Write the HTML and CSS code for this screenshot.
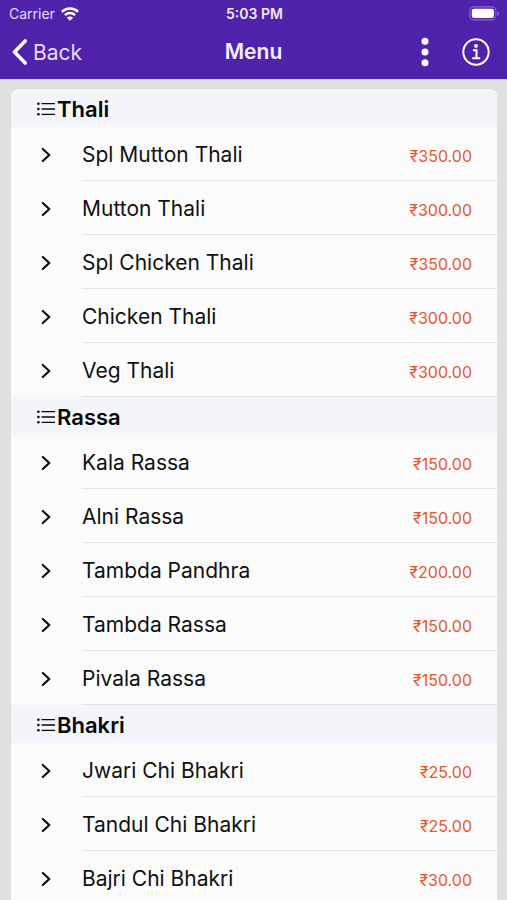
FILE: index.html
```html
<!DOCTYPE html>
<html lang="en">
<head>
<meta charset="utf-8">
<meta name="viewport" content="width=device-width, initial-scale=1">
<title>Menu</title>
<link rel="stylesheet" href="styles.css">
</head>
<body>
<svg class="sprite" aria-hidden="true">
  <symbol id="list" viewBox="0 0 18 14"><g fill="currentColor"><circle cx="1.4" cy="1.7" r="1.3"/><circle cx="1.4" cy="7" r="1.3"/><circle cx="1.4" cy="12.3" r="1.3"/></g><path d="M5 1.7h12.5M5 7h12.5M5 12.3h12.5" stroke="currentColor" stroke-width="1.3" stroke-linecap="round"/></symbol>
  <symbol id="chevron" viewBox="0 0 10 16"><path d="M1.8 2 8.300 8l-6.500 6" fill="none" stroke="currentColor" stroke-width="2.200" stroke-linecap="round" stroke-linejoin="round"/></symbol>
</svg>
<header class="top">
  <div class="status">
    <div class="carrier">Carrier
      <svg width="18" height="14" viewBox="0 0 18 14" fill="none" stroke="currentColor" stroke-width="2.500"><path d="M.9 4.900a11.500 11.500 0 0 1 16.200 0M3.900 8.200a7.300 7.300 0 0 1 10.200 0"/><path d="M9 13.800 5.900 10.700a4.400 4.400 0 0 1 6.200 0Z" fill="currentColor" stroke="none"/></svg>
    </div>
    <div class="time">5:03 PM</div>
    <svg class="battery" width="31" height="15" viewBox="0 0 31 15"><rect x=".9" y=".9" width="26" height="13" rx="4" fill="none" stroke="#8a6dcb" stroke-width="1.100"/><rect x="2.800" y="2.800" width="22.200" height="9.200" rx="2.200" fill="#fff"/><path d="M28.600 5.200c2 .8 2 3.700 0 4.500Z" fill="#8a6dcb"/></svg>
  </div>
  <nav class="bar">
    <button class="back" type="button"><svg width="16" height="26" viewBox="0 0 16 26"><path d="M13.200 2 2.500 13l10.700 11" fill="none" stroke="currentColor" stroke-width="3.600" stroke-linecap="round" stroke-linejoin="round"/></svg>Back</button>
    <h1>Menu</h1>
    <div class="actions">
      <button type="button" aria-label="More"><svg width="8" height="30" viewBox="0 0 8 30" fill="currentColor"><circle cx="4" cy="4.300" r="3.500"/><circle cx="4" cy="15" r="3.500"/><circle cx="4" cy="25.700" r="3.500"/></svg></button>
      <button type="button" aria-label="Information"><svg width="28" height="28" viewBox="0 0 28 28" fill="none" stroke="currentColor" stroke-width="2"><circle cx="14" cy="14" r="12.700"/><path d="M11 12.200h3.500v7.700M10.200 20.200h8"/><circle cx="14" cy="7.900" r="1.900" fill="currentColor" stroke="none"/></svg></button>
    </div>
  </nav>
</header>
<main class="card" id="menu"></main>
<script src="menu.js"></script>
</body>
</html>
```
FILE: styles.css
```css
* { box-sizing: border-box; }
html, body { height: 100%; }
body {
  margin: 0;
  display: flex;
  flex-direction: column;
  overflow: hidden;
  background: #e0e0e0;
  color: #111;
  font-family: Inter, "Liberation Sans", sans-serif;
}
h1, h2, ul { margin: 0; padding: 0; }
ul { list-style: none; }
button {
  display: flex;
  align-items: center;
  padding: 0;
  border: 0;
  background: none;
  color: inherit;
  font: inherit;
}
svg { display: block; flex: none; }
.sprite { position: absolute; width: 0; height: 0; }

.top {
  flex: none;
  background: #4e22aa;
  border-bottom: 1px solid #d8ccee;
  color: #fff;
}
.status, .bar {
  display: grid;
  grid-template-columns: 1fr auto 1fr;
  align-items: center;
}
.status { height: 27px; padding: 0 7px 0 9px; }
.carrier { display: flex; align-items: center; gap: 6px; font-size: 14px; color: #e6def5; }
.carrier svg { color: #fff; }
.time { font-size: 14px; font-weight: 600; color: #f0eafa; }
.battery { justify-self: end; }
.bar { height: 52px; padding: 0 17px 2px 12px; }
.back { gap: 5px; font-size: 21px; color: #e6def5; }
.back svg { color: #fff; }
.bar h1 { padding-left: 5px; font-size: 21px; font-weight: 600; line-height: 26px; color: #f4effc; }
.actions { display: flex; align-items: center; justify-content: flex-end; gap: 33px; }

.card {
  flex: 1;
  min-height: 0;
  margin: 9px 10px 0 11px;
  overflow: hidden;
  border-radius: 8px 8px 0 0;
  background: #fbfbfb;
}
.section-title {
  display: flex;
  align-items: center;
  gap: 2px;
  height: 38px;
  padding: 2px 0 0 26px;
  background: #f3f5fa;
  font-size: 22px;
  font-weight: 600;
  line-height: 36px;
  color: #080808;
}
.list-icon { width: 18px; height: 14px; }
.item { display: flex; height: 54px; padding-left: 30px; }
.chevron { width: 10px; height: 16px; margin: 20px 31px 0 0; }
.line {
  display: flex;
  flex: 1;
  align-items: center;
  justify-content: space-between;
  padding: 2px 25px 0 0;
  border-bottom: 1px solid #e4e4e5;
}
.name { font-size: 21px; }
.price { padding-top: 2px; font-size: 16px; color: #e4592b; }
```
FILE: menu.js
```js
const sections = [
  ["Thali", [["Spl Mutton Thali", 350], ["Mutton Thali", 300], ["Spl Chicken Thali", 350], ["Chicken Thali", 300], ["Veg Thali", 300]]],
  ["Rassa", [["Kala Rassa", 150], ["Alni Rassa", 150], ["Tambda Pandhra", 200], ["Tambda Rassa", 150], ["Pivala Rassa", 150]]],
  ["Bhakri", [["Jwari Chi Bhakri", 25], ["Tandul Chi Bhakri", 25], ["Bajri Chi Bhakri", 30]]]
];

const row = ([name, price]) => `
  <li class="item">
    <svg class="chevron" aria-hidden="true"><use href="#chevron"/></svg>
    <div class="line"><span class="name">${name}</span><span class="price">₹${price.toFixed(2)}</span></div>
  </li>`;

document.getElementById("menu").innerHTML = sections.map(([title, items]) => `
  <section>
    <h2 class="section-title"><svg class="list-icon" aria-hidden="true"><use href="#list"/></svg>${title}</h2>
    <ul>${items.map(row).join("")}</ul>
  </section>`).join("");
```
